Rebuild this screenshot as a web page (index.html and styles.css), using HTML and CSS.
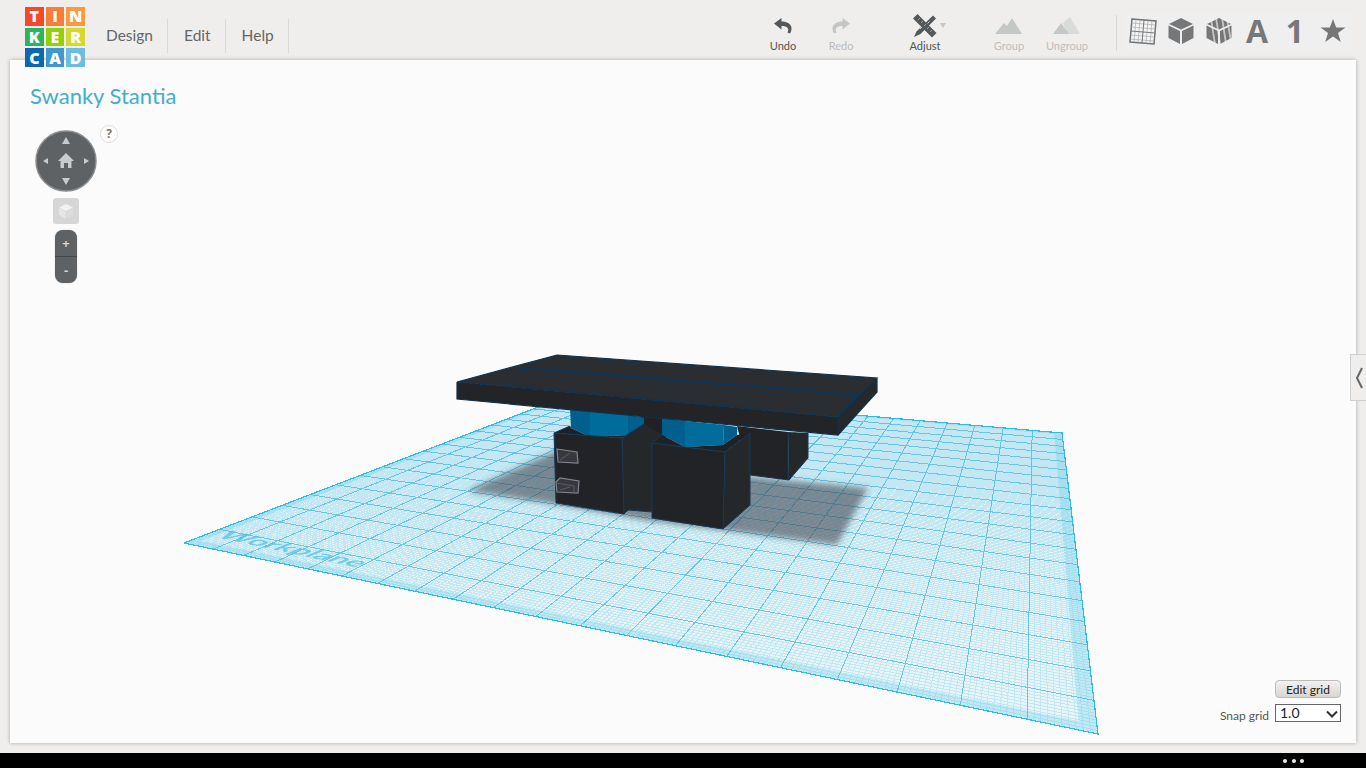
FILE: index.html
```html
<!DOCTYPE html>
<html lang="en">
<head>
<meta charset="utf-8">
<title>Swanky Stantia - Tinkercad</title>
<link rel="stylesheet" href="styles.css">
</head>
<body>
<header class="topbar">
  <div class="logo">
    <span class="tile t1">T</span><span class="tile t2">I</span><span class="tile t3">N</span>
    <span class="tile t4">K</span><span class="tile t5">E</span><span class="tile t6">R</span>
    <span class="tile t7">C</span><span class="tile t8">A</span><span class="tile t9">D</span>
  </div>
  <nav class="menu">
    <a class="menu-item first">Design</a>
    <a class="menu-item">Edit</a>
    <a class="menu-item">Help</a>
  </nav>
  <div class="tools">
    <button class="tool">
      <svg class="ico" width="20" height="18" viewBox="0 0 20 18"><path class="f-dark" d="M1 6.5 8.5 1V4.6C14 4.6 18.5 7 18.5 11.5 18.5 13.4 18 14.8 17 16.5L14.4 15.4C15.4 13.8 15.6 12.4 14.6 11 13.5 9.5 11.4 9 8.5 9V12.6Z"/></svg>
      <span>Undo</span>
    </button>
    <button class="tool off">
      <svg class="ico flip" width="20" height="18" viewBox="0 0 20 18"><path class="f-off" d="M1 6.5 8.5 1V4.6C14 4.6 18.5 7 18.5 11.5 18.5 13.4 18 14.8 17 16.5L14.4 15.4C15.4 13.8 15.6 12.4 14.6 11 13.5 9.5 11.4 9 8.5 9V12.6Z"/></svg>
      <span>Redo</span>
    </button>
    <button class="tool adjust">
      <svg class="ico" width="36" height="24" viewBox="0 0 36 24">
        <path class="f-dark" d="M20 1.500 23 4.500 7.500 20 1 23 3.500 17.500Z"/>
        <path class="f-dark" d="M4.500 0 0 4.500 19 23.500 23.500 19Z"/>
        <path class="tick" d="M5 6 7 4M8 9 10 7M11 12 13 10M14 15 16 13M17 18 19 16"/>
        <path class="pencil-gap" d="M16.500 7.500 14.500 9.500M9 13 7 15"/>
        <path class="f-off" d="M27 9H33L30 14Z"/>
      </svg>
      <span>Adjust</span>
    </button>
    <button class="tool off gap">
      <svg class="ico" width="28" height="18" viewBox="0 0 28 18"><path class="f-off" d="M0 17 9 6 12 9 17 1 27 17Z"/></svg>
      <span>Group</span>
    </button>
    <button class="tool off">
      <svg class="ico" width="28" height="18" viewBox="0 0 28 18"><path class="f-lite" d="M10 6 17 0 27 17H14Z"/><path class="f-off" d="M0 17 8 6 16 17Z"/></svg>
      <span>Ungroup</span>
    </button>
    <div class="tool-sep"></div>
    <div class="views">
      <span class="view">
        <svg width="28" height="28" viewBox="0 0 28 28">
          <path class="gridface" d="M3 2 27 4 25 27 1 25Z"/>
          <path class="gridfine" d="M7 2.400 5 25.300M11 2.700 9 25.700M19 3.400 17 26.300M23 3.700 21 26.700M2.600 6 26.600 8M2.200 10 26.200 12M1.600 18 25.600 20M1.200 22 25.200 24"/>
          <path class="gridmain" d="M15 3 13 26M2 14 26 16"/>
        </svg>
      </span>
      <span class="view">
        <svg width="26" height="28" viewBox="0 0 26 28"><path class="f-view" d="M13 1 25 7 13 12.500 1 7Z"/><path class="f-view" d="M0.500 8.500 12 14V27L0.500 21Z"/><path class="f-view" d="M25.500 8.500 14 14V27L25.500 21Z"/></svg>
      </span>
      <span class="view">
        <svg width="26" height="28" viewBox="0 0 26 28">
          <path class="f-view" d="M13 1 25 7 13 12.500 1 7Z"/><path class="f-view" d="M0.500 8.500 12 14V27L0.500 21Z"/><path class="f-view" d="M25.500 8.500 14 14V27L25.500 21Z"/>
          <path class="stripes" d="M5 2 9 27M10 0 14 27M16 0 20 27M21 2 25 24"/>
        </svg>
      </span>
      <span class="view letter">A</span>
      <span class="view letter">1</span>
      <span class="view">
        <svg width="26" height="26" viewBox="0 0 26 26"><path class="f-view" d="M13 1 16.200 9.500H25.500L18 15 20.800 24 13 18.600 5.200 24 8 15 .5 9.500H9.800Z"/></svg>
      </span>
    </div>
  </div>
</header>

<main class="stage">
  <section class="canvas">
    <svg id="scene" class="scene" viewBox="10 60 1346 683" width="1346" height="683">
      <defs>
        <filter id="soft" x="-10%" y="-20%" width="120%" height="140%"><feGaussianBlur stdDeviation="3"/></filter>
      </defs>
      <g id="plane"></g>
      <text class="wp-label" transform="matrix(1.45 .31 -1.1 .45 215 537)">Workplane</text>
      <path class="shadow" filter="url(#soft)" d="M467 491 556 451 640 470 740 476 868 488 837 545 650 521 560 505Z"/>

      <!-- back box -->
      <path class="b-front" d="M737 426 788 432 789 480 750 475Z"/>
      <path class="b-side" d="M788 432 808 433 808 458 789 480Z"/>
      <path class="edge" d="M788 432V480M808 433V458L789 480 750 475"/>

      <!-- gap between the columns -->
      <path class="b-top" d="M640 412 666 412 666 442 640 434Z"/>

      <!-- blue columns -->
      <path class="c-dark" d="M570 408 590 410 590 437 571 428Z"/>
      <path class="c-mid" d="M590 410 628 414 628 435 590 437Z"/>
      <path class="c-dark" d="M628 414 644 418 644 424 628 435Z"/>

      <!-- left box and centre piece -->
      <path class="b-side" d="M622 438 644 424 665 436 655 512 628 510 624 514Z"/>
      <path class="b-top" d="M554 433 570 426 571 428 590 437 628 435 644 424 622 438Z"/>
      <path class="b-front" d="M554 433 622 438 624 514 556 503Z"/>
      <path class="edge" d="M554 433 622 438 624 514 556 503ZM622 438 644 424M624 514 628 510 653 512M554 433 570 426"/>

      <path class="c-dark" d="M662 418 685 421 685 447 662 435Z"/>
      <path class="c-mid" d="M685 421 724 425 723 445 685 447Z"/>
      <path class="c-dark" d="M724 425 737 427 737 435 723 445Z"/>

      <!-- front box -->
      <path class="b-top" d="M652 443 662 435 685 447 723 445 737 435 750 433 725 452Z"/>
      <path class="b-front" d="M652 443 725 452 723 529 652 518Z"/>
      <path class="b-side" d="M725 452 750 433 750 505 723 529Z"/>
      <path class="edge" d="M652 443 725 452 723 529 652 518ZM725 452 750 433V505L723 529M652 443 662 435"/>

      <!-- connector parts -->
      <g class="port">
        <path d="M557 449 577 452 578 463 558 462Z"/>
        <path d="M556 482 560 478 579 481 578 493 557 492Z"/>
      </g>
      <path class="port-line" d="M560 460 570 453M556 483 574 486 574 493M560 490 570 487"/>

      <!-- table top -->
      <path class="s-top" d="M457 382 557 355 877 378 838 417Z"/>
      <path class="s-front" d="M457 382 838 417 838 435 457 399Z"/>
      <path class="s-side" d="M838 417 877 378 877 392 838 435Z"/>
      <path class="s-edge" d="M457 382 557 355 877 378 838 417ZM457 382V399L838 435V417M838 435 877 392V378"/>
      <path class="s-split" d="M522 368 858 395 838 417"/>
    </svg>

    <h1 class="title">Swanky Stantia</h1>

    <div class="controls">
      <div class="pad-row">
        <div class="pad">
          <svg width="62" height="62" viewBox="0 0 62 62">
            <circle class="pad-disc" cx="31" cy="31" r="30"/>
            <path class="pad-ico" d="M31 7 35 14H27ZM31 55 27 48H35ZM8 31 13 28V34ZM54 31 49 28V34Z"/>
            <path class="pad-ico" d="M31 23 39 31H36.500V38H33V33H29V38H25.500V31H23Z"/>
          </svg>
        </div>
        <span class="help">?</span>
      </div>
      <div class="cube-btn">
        <svg width="16" height="16" viewBox="0 0 16 16"><path class="cube-a" d="M8 1 15 4.500 8 8 1 4.500Z"/><path class="cube-b" d="M1 5 7.500 8.500V15.500L1 12Z"/><path class="cube-c" d="M15 5 8.500 8.500V15.500L15 12Z"/></svg>
      </div>
      <div class="zoom-pill">
        <span class="zoom-btn">+</span>
        <span class="zoom-btn lower">-</span>
      </div>
    </div>

    <div class="grid-tools">
      <button class="edit-grid">Edit grid</button>
      <label class="snap">
        <span class="snap-text">Snap grid</span>
        <span class="select-wrap">
          <select class="snap-select"><option>1.0</option><option>0.5</option><option>0.25</option></select>
          <svg class="caret" width="12" height="8" viewBox="0 0 12 8"><path d="M1 1.500 6 6.500 11 1.500"/></svg>
        </span>
      </label>
    </div>

    <div class="side-tab">
      <svg width="8" height="22" viewBox="0 0 8 22"><path d="M7 1 2 11 7 21"/></svg>
    </div>
  </section>
</main>

<footer class="taskbar"><i></i><i></i><i></i></footer>
<script src="script.js"></script>
</body>
</html>
```
FILE: styles.css
```css
* { box-sizing: border-box; }
html, body { margin: 0; height: 768px; overflow: hidden; }
body {
  display: flex;
  flex-direction: column;
  background: #efeeec;
  font-family: Lato, "Open Sans", sans-serif;
  color: #666;
}

/* top bar */
.topbar { height: 60px; flex: none; display: flex; align-items: flex-start; position: relative; z-index: 3; }
.logo {
  width: 60px; height: 60px; margin: 7px 0 0 25px;
  display: grid; grid-template-columns: repeat(3, 18.67px); grid-auto-rows: 18.67px; gap: 2px;
  flex: none;
}
.tile {
  display: flex; align-items: center; justify-content: center;
  color: #fff; font: 800 16px/1 "Open Sans", sans-serif;
}
.t1 { background: #f3492b; } .t2 { background: #f67d3c; } .t3 { background: #f89b3f; }
.t4 { background: #2fb35c; } .t5 { background: #92d00d; } .t6 { background: #d4d82f; }
.t7 { background: #0a68b0; } .t8 { background: #3f98ce; } .t9 { background: #6dbde1; }

.menu { display: flex; margin: 19px 0 0 21px; }
.menu-item {
  height: 34px; line-height: 32px; padding: 0 14px 0 16px; font-size: 15.500px; color: #666;
  border-right: 1px solid #d9d9d7;
}
.menu-item.first { padding-left: 0; padding-right: 14px; }

.tools { margin-left: auto; display: flex; align-items: flex-start; padding-right: 14px; }
.tool {
  width: 58px; height: 60px; padding: 0; border: 0; background: none;
  display: flex; flex-direction: column; align-items: center; justify-content: flex-start;
  font: 11px/14px Lato, sans-serif; color: #555;
  position: relative; left: -1px;
}
.tool .ico { height: 24px; margin-top: 14px; flex: none; overflow: visible; }
.tool span { margin-top: 1px; }
.tool.off { color: #bdbdbd; }
.tool.adjust { margin-left: 26px; }
.tool.adjust .ico { margin-left: 12px; }
.tool.gap { margin-left: 26px; }
.flip { transform: scaleX(-1); }
.f-dark { fill: #55585b; }
.f-off { fill: #c5c6c6; }
.f-lite { fill: #d9dada; }
.tick { fill: none; stroke: #9a9c9e; stroke-width: 1; }
.pencil-gap { fill: none; stroke: #efeeec; stroke-width: .8; }
.tool-sep { width: 1px; height: 36px; margin: 15px 7px 0 19px; background: #d9d9d7; }
.views { display: flex; margin-top: 13px; }
.view {
  width: 38px; height: 36px; display: flex; align-items: center; justify-content: center;
  background: #f0efef;
}
.letter { font: 700 32px/36px "Open Sans", sans-serif; color: #777; }
.f-view { fill: #757779; }
.gridface { fill: #f4f4f4; stroke: #707274; stroke-width: 1.500; }
.gridfine { fill: none; stroke: #a9abac; stroke-width: .7; }
.gridmain { fill: none; stroke: #77797b; stroke-width: 1; }
.stripes { fill: none; stroke: #efeeec; stroke-width: 1.800; opacity: .65; }

/* stage */
.stage { flex: 1; min-height: 0; padding: 0 10px 10px; display: flex; }
.canvas {
  flex: 1; position: relative; background: #fbfbfb;
  box-shadow: 0 0 4px rgba(0, 0, 0, .3);
  padding: 23px 20px 0;
}
.scene { position: absolute; inset: 0; }
.title {
  position: relative; margin: 0; font: 400 22px/26px Lato, sans-serif; color: #3fafc8;
}

.controls {
  position: absolute; left: 25px; top: 70px;
  display: flex; flex-direction: column; align-items: flex-start;
}
.pad-row { display: flex; align-items: flex-start; }
.pad { width: 62px; height: 62px; }
.pad svg { display: block; }
.pad-disc { fill: #5f6265; stroke: #8b8d8f; stroke-width: 1.500; }
.pad-ico { fill: #c9cacb; }
.help {
  width: 18px; height: 18px; margin: -5px 0 0 3px; border: 1px solid #dedede; border-radius: 50%;
  background: #fff; display: flex; align-items: center; justify-content: center;
  font: 700 12px/1 "Open Sans", sans-serif; color: #777;
}
.cube-btn {
  width: 26px; height: 26px; margin: 6px 0 0 18px; border-radius: 3px; background: #d6d6d6;
  display: flex; align-items: center; justify-content: center;
}
.cube-a { fill: #f2f2f2; } .cube-b { fill: #e6e6e6; } .cube-c { fill: #dcdcdc; }
.zoom-pill {
  width: 22px; height: 53px; margin: 6px 0 0 20px; border-radius: 8px; background: #5f6265;
  box-shadow: 0 0 1px #8b8d8f; display: flex; flex-direction: column; overflow: hidden;
}
.zoom-btn {
  flex: 1; display: flex; align-items: center; justify-content: center;
  font: 700 13px/1 "Open Sans", sans-serif; color: #d4d5d5;
}
.zoom-btn.lower { border-top: 1px solid #45484a; }

.grid-tools {
  position: absolute; right: 15px; bottom: 21px;
  display: flex; flex-direction: column; align-items: flex-end; gap: 6px;
}
.edit-grid {
  width: 66px; height: 18px; padding: 0; border: 1px solid #bbb; border-radius: 4px;
  background: linear-gradient(#f2f1ef, #d8d6d3);
  font: 12px/17px Lato, sans-serif; color: #222;
}
.snap { display: flex; align-items: flex-start; gap: 6px; font: 12px/18px Lato, sans-serif; color: #555; }
.snap-text { padding-top: 3px; margin-bottom: -3px; }
.select-wrap { position: relative; display: block; width: 66px; height: 18px; }
.snap-select {
  appearance: none; display: block; width: 66px; height: 18px; padding: 0 0 0 4px; margin: 0;
  border: 1px solid #666; border-radius: 0; background: #fff;
  font: 14px/16px Lato, sans-serif; color: #222;
}
.caret { position: absolute; right: 3px; top: 6px; pointer-events: none; }
.caret path { fill: none; stroke: #333; stroke-width: 2; }

.side-tab {
  position: absolute; right: -10px; top: 294px; width: 16px; height: 47px;
  background: #efeeec; border: 1px solid #cfcfcf; border-right: 0;
  display: flex; align-items: center; justify-content: center;
}
.side-tab path { fill: none; stroke: #666; stroke-width: 2; }

/* 3D scene */
.plane-fill { fill: rgba(150, 220, 238, .18); }
.plane-band { fill: rgba(90, 200, 232, .28); fill-rule: evenodd; }
.plane-minor { fill: none; stroke: rgba(85, 195, 228, .25); stroke-width: 1; shape-rendering: crispEdges; }
.plane-major { fill: none; stroke: rgba(60, 180, 215, .7); stroke-width: 1; shape-rendering: crispEdges; }
.plane-edge { fill: none; stroke: #2fbbe8; stroke-width: 1.200; shape-rendering: crispEdges; }
.wp-label { font: 700 20px Lato, sans-serif; fill: rgba(70, 190, 228, .7); }
.shadow { fill: rgba(60, 65, 75, .58); }
.b-front { fill: #212326; } .b-side { fill: #25282b; } .b-top { fill: #1f2124; }
.edge { fill: none; stroke: #14385a; stroke-width: 1; }
.c-dark { fill: #005f8d; } .c-mid { fill: #006c9b; }
.port path { fill: #37383e; stroke: #85838e; stroke-width: 1.200; }
.port-line { fill: none; stroke: #66656e; stroke-width: .8; }
.s-top { fill: #2a2e32; } .s-front { fill: #222427; } .s-side { fill: #26292c; }
.s-edge { fill: none; stroke: #0f3150; stroke-width: 1.200; }
.s-split { fill: none; stroke: #0c3558; stroke-width: 1.800; }

/* task bar */
.taskbar {
  height: 15px; flex: none; background: #000;
  display: flex; align-items: center; justify-content: flex-end; gap: 4.500px; padding-right: 62px;
}
.taskbar i { width: 4px; height: 4px; border-radius: 50%; background: #eee; }
```
FILE: script.js
```js
// Draws the workplane grid: a flat square seen in perspective, mapped by a homography.
(function () {
  var NS = 'http://www.w3.org/2000/svg';
  var c = [[580, 391], [1062, 433], [1098, 734], [184, 543]];
  var dx1 = c[1][0] - c[2][0], dx2 = c[3][0] - c[2][0], sx = c[0][0] - c[1][0] + c[2][0] - c[3][0];
  var dy1 = c[1][1] - c[2][1], dy2 = c[3][1] - c[2][1], sy = c[0][1] - c[1][1] + c[2][1] - c[3][1];
  var den = dx1 * dy2 - dx2 * dy1;
  var g = (sx * dy2 - dx2 * sy) / den, h = (dx1 * sy - sx * dy1) / den;
  var a = c[1][0] - c[0][0] + g * c[1][0], b = c[3][0] - c[0][0] + h * c[3][0];
  var d = c[1][1] - c[0][1] + g * c[1][1], e = c[3][1] - c[0][1] + h * c[3][1];
  function map(u, v) {
    var w = g * u + h * v + 1;
    return ((a * u + b * v + c[0][0]) / w).toFixed(1) + ' ' + ((d * u + e * v + c[0][1]) / w).toFixed(1);
  }
  function seg(u0, v0, u1, v1) { return 'M' + map(u0, v0) + 'L' + map(u1, v1); }
  function quad(i) {
    return 'M' + map(i, i) + 'L' + map(1 - i, i) + 'L' + map(1 - i, 1 - i) + 'L' + map(i, 1 - i) + 'Z';
  }
  var minor = '', major = '', n = 200;
  for (var k = 0; k <= n; k++) {
    var t = k / n;
    if (k % 10 === 0) { major += seg(t, 0, t, 1) + seg(0, t, 1, t); }
    else { minor += seg(t, 0, t, 1) + seg(0, t, 1, t); }
  }
  var host = document.getElementById('plane');
  function add(cls, dPath) {
    var p = document.createElementNS(NS, 'path');
    p.setAttribute('class', cls);
    p.setAttribute('d', dPath);
    host.appendChild(p);
  }
  add('plane-fill', quad(0));
  add('plane-band', quad(0) + quad(0.013));
  add('plane-minor', minor);
  add('plane-major', major);
  add('plane-edge', quad(0));
})();
```
